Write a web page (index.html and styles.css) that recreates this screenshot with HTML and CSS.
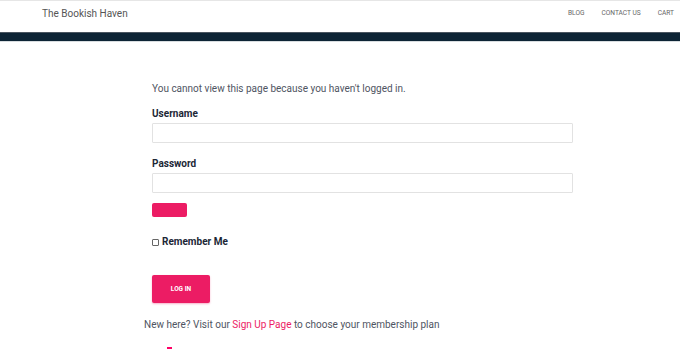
FILE: index.html
```html
<!DOCTYPE html>
<html>
<head>
<meta charset="utf-8">
<link rel="stylesheet" href="styles.css">
</head>
<body>
<header class="site-header">
  <div class="brand">The Bookish Haven</div>
  <nav class="nav">
    <a href="#">BLOG</a>
    <a href="#">CONTACT US</a>
    <a href="#">CART</a>
  </nav>
</header>
<div class="bar"></div>
<main class="content">
  <form class="login">
    <p class="notice">You cannot view this page because you haven't logged in.</p>
    <label class="lbl">Username</label>
    <input class="field" type="text">
    <label class="lbl lbl-pw">Password</label>
    <input class="field" type="password">
    <div class="mini-btn"></div>
    <label class="remember"><span class="box"></span>Remember Me</label>
    <button class="login-btn" type="button">LOG IN</button>
  </form>
  <p class="signup">New here? Visit our <a href="#">Sign Up Page</a> to choose your membership plan</p>
  <div class="dot"></div>
</main>
</body>
</html>
```
FILE: styles.css
```css
* { box-sizing: border-box; }
html, body { margin: 0; padding: 0; background: #fff; overflow: hidden; }
body { font-family: Roboto, "Liberation Sans", sans-serif; width: 680px; height: 349px; }
.site-header {
  height: 32px;
  border-top: 1px solid #e6e6e6;
  display: flex;
  align-items: center;
  justify-content: space-between;
  padding: 0 0 0 42px;
}
.brand { font-size: 10px; color: #555; margin-top: -7px; }
.nav { display: flex; margin-top: -7px; }
.nav a { font-size: 6.6px; color: #666; text-decoration: none; margin-left: 17px; }
.nav a:last-child { margin-right: 6px; }
.bar {
  height: 10px;
  background: #0d2435;
  border-top: 1px solid #4a5560;
  border-bottom: 1px solid #d8dde0;
}
.content { padding: 0 0 0 144px; }
.login { display: flex; flex-direction: column; align-items: flex-start; padding-left: 8px; width: 437px; }
.notice { margin: 41px 0 0; font-size: 10px; color: #4f5562; line-height: 12px; }
.lbl { font-size: 10px; font-weight: 700; color: #1c2736; margin-top: 13px; line-height: 12px; }
.lbl-pw { margin-top: 15px; }
.field {
  width: 421px; height: 20px; margin-top: 3px;
  border: 1px solid #e2e2e2; background: #fff; border-radius: 1px;
}
.mini-btn { width: 35px; height: 14px; background: #ec1c64; border-radius: 2px; margin-top: 10px; }
.remember { display: flex; align-items: center; font-size: 10px; font-weight: 700; color: #1c2736; margin-top: 19px; line-height: 12px; }
.box { width: 7px; height: 7px; border: 1px solid #666; border-radius: 1px; margin-right: 3px; }
.login-btn {
  margin-top: 27px; width: 58px; height: 28px;
  background: #ec1c64; border: none; border-radius: 2px; color: #fff;
  font-family: Roboto, "Liberation Sans", sans-serif; font-size: 6.5px; font-weight: 700;
  box-shadow: 0 1px 2px rgba(236,28,100,0.35);
}
.signup { margin: 16px 0 0; font-size: 10px; color: #4f5562; line-height: 12px; }
.signup a { color: #ec1c64; text-decoration: none; }
.dot { width: 5px; height: 2px; background: #f06; margin: 16px 0 0 23px; }
```
